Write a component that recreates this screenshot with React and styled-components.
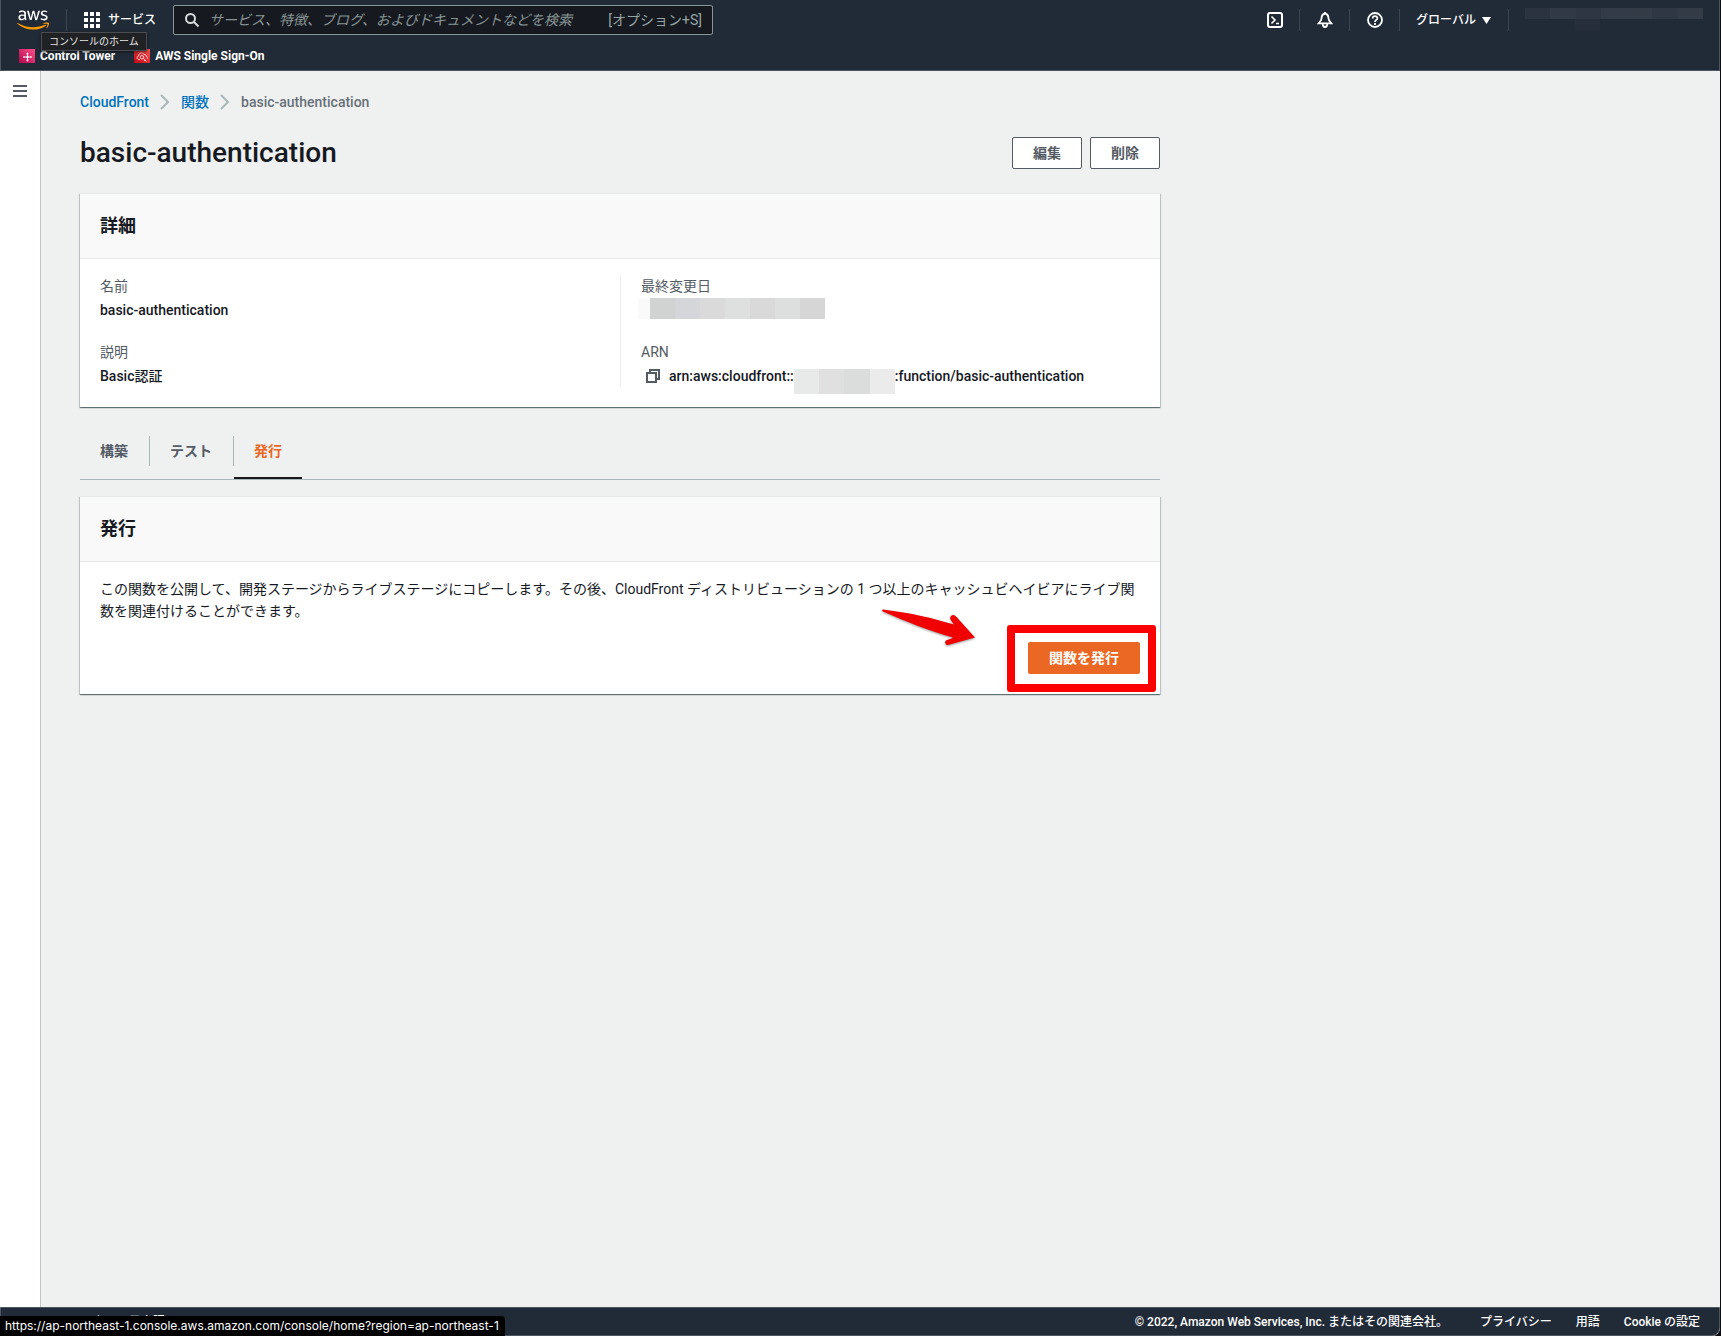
import { styled, createGlobalStyle } from 'styled-components';
import { FaAws } from 'react-icons/fa';

const ACCOUNT_CELLS = ['#2a333f', '#303945', '#2d3642', '#323b47', '#333b47', '#2e3743', '#323b46'];
const DATE_CELLS = ['#d1d3d2', '#d5d6d9', '#dadada', '#dee0df', '#d9d9d9', '#dddfde', '#d6d6d6'];
const ARN_CELLS = ['#e8eaea', '#e0e0e0', '#dbdcdc', '#ebebeb'];

export default function App() {
  return (
    <Page>
      <GlobalStyle />
      <Header />
      <Body>
        <SideBar>
          <MenuButton aria-label="メニュー">
            <svg width="14" height="12" viewBox="0 0 14 12" fill="#545b64">
              <path d="M0 0h14v2H0zM0 5h14v2H0zM0 10h14v2H0z" />
            </svg>
          </MenuButton>
        </SideBar>
        <Main>
          <Content>
            <Breadcrumbs>
              <a href="#cloudfront">CloudFront</a>
              <Chevron />
              <a href="#functions">関数</a>
              <Chevron />
              <span>basic-authentication</span>
            </Breadcrumbs>
            <TitleRow>
              <h1>basic-authentication</h1>
              <Actions>
                <Button>編集</Button>
                <Button>削除</Button>
              </Actions>
            </TitleRow>
            <Details />
            <Tabs />
            <Publish />
          </Content>
        </Main>
      </Body>
      <Footer />
      <StatusBar>
        https://ap-northeast-1.console.aws.amazon.com/console/home?region=ap-northeast-1
      </StatusBar>
    </Page>
  );
}

function Header() {
  return (
    <HeaderContainer>
      <TopRow>
        <LogoLink href="#home" aria-label="AWS">
          <svg width="0" height="0">
            <linearGradient id="aws-fill" x1="0" y1="0" x2="0" y2="1">
              <stop offset="0.63" stopColor="#fff" />
              <stop offset="0.63" stopColor="#f90" />
            </linearGradient>
          </svg>
          <FaAws />
        </LogoLink>
        <Divider />
        <ServicesButton>
          <svg width="16" height="16" viewBox="0 0 16 16" fill="#fff">
            {[0, 6, 12].map((y) =>
              [0, 6, 12].map((x) => (
                <rect key={`${x}-${y}`} x={x} y={y} width="4" height="4" />
              ))
            )}
          </svg>
          サービス
        </ServicesButton>
        <SearchBox>
          <svg width="14" height="14" viewBox="0 0 14 14" fill="none" stroke="#d5dbdb" strokeWidth="2">
            <circle cx="5.5" cy="5.5" r="4.5" />
            <path d="M9 9l4.5 4.5" />
          </svg>
          <input
            type="text"
            aria-label="検索"
            placeholder="サービス、特徴、ブログ、およびドキュメントなどを検索"
          />
          <Shortcut>[オプション+S]</Shortcut>
        </SearchBox>
        <Tools>
          <ToolButton aria-label="CloudShell">
            <svg width="16" height="16" viewBox="0 0 16 16" fill="none" stroke="#fff" strokeWidth="2">
              <rect x="1" y="1" width="14" height="14" rx="2" />
              <path d="M4.500 4.500L8 8l-3.500 3.500M9 11.500h3" strokeWidth="1.600" />
            </svg>
          </ToolButton>
          <ToolButton aria-label="通知">
            <svg width="16" height="16" viewBox="0 0 16 16" fill="none" stroke="#fff" strokeWidth="1.800">
              <path d="M8 1.500C5.500 2 4.600 4 4.500 6.500 4.400 8.500 3 9.700 1.600 11.400h12.800C13 9.700 11.600 8.500 11.500 6.500 11.400 4 10.500 2 8 1.500z" />
              <path d="M5.800 12c0 4 4.400 4 4.400 0M8 0v2" />
            </svg>
          </ToolButton>
          <ToolButton aria-label="ヘルプ">
            <svg width="16" height="16" viewBox="0 0 16 16" fill="none" stroke="#fff" strokeWidth="1.800">
              <circle cx="8" cy="8" r="7" />
              <path d="M5.700 6.500c0-3.200 4.700-3 4.700-.300C10.400 8 8 7.800 8 10" />
              <path d="M8 11v2" />
            </svg>
          </ToolButton>
          <RegionButton>
            グローバル
            <svg width="9" height="7" viewBox="0 0 9 7" fill="#fff">
              <path d="M0 0h9L4.500 7z" />
            </svg>
          </RegionButton>
          <Account>
            <Mosaic cells={ACCOUNT_CELLS} height={11} />
            <AccountTail />
          </Account>
        </Tools>
      </TopRow>
      <Favorites>
        <Favorite href="#control-tower">
          <svg width="16" height="14" viewBox="0 0 16 14">
            <defs>
              <linearGradient id="tower" x1="0" y1="1" x2="1" y2="0">
                <stop offset="0" stopColor="#b0084d" />
                <stop offset="1" stopColor="#ff4f8b" />
              </linearGradient>
            </defs>
            <rect width="16" height="14" fill="url(#tower)" />
            <path d="M8.500 4v8M4.500 8h8M7.400 5l1.100-1 1.100 1M7.400 11l1.100 1 1.100-1M5.500 7l-1 1 1 1M11.500 7l1 1-1 1" fill="none" stroke="#fff" strokeWidth="0.900" />
            <circle cx="8.500" cy="8" r="1.200" fill="#fff" />
          </svg>
          Control Tower
        </Favorite>
        <Favorite href="#sso">
          <svg width="16" height="14" viewBox="0 0 16 14">
            <defs>
              <linearGradient id="sso" x1="0" y1="1" x2="1" y2="0">
                <stop offset="0" stopColor="#bd0816" />
                <stop offset="1" stopColor="#ff5252" />
              </linearGradient>
            </defs>
            <rect width="16" height="14" fill="url(#sso)" />
            <g fill="none" stroke="#ffd9d9" strokeWidth="0.900">
              <path d="M6 10.500H5C2.500 10.500 2.500 7.200 4.700 7 4.500 3.400 9 2.800 10 5.500c1.500-.500 2 .500 2 1.500 1.500.300 1.800 1.800 1 2.700" />
              <circle cx="8" cy="8.200" r="1.700" />
              <path d="M9.300 9.400l3.200 3M11 11l-.800.900" />
            </g>
          </svg>
          AWS Single Sign-On
        </Favorite>
      </Favorites>
      <Tooltip role="tooltip">コンソールのホーム</Tooltip>
    </HeaderContainer>
  );
}

function Details() {
  return (
    <Card>
      <CardHeader>
        <h2>詳細</h2>
      </CardHeader>
      <DetailGrid>
        <Column>
          <Field label="名前">basic-authentication</Field>
          <Field label="説明">Basic認証</Field>
        </Column>
        <Column $divided>
          <Field label="最終変更日">
            <DateMask>
              <Mosaic cells={DATE_CELLS} height={21} />
            </DateMask>
          </Field>
          <Field label="ARN">
            <CopyButton aria-label="コピー">
              <svg width="14" height="14" viewBox="0 0 14 14" fill="none" stroke="#545b64" strokeWidth="2">
                <path d="M4 3.500V1h9v9h-2.500" />
                <path d="M1 4h9v9H1z" />
              </svg>
            </CopyButton>
            arn:aws:cloudfront::
            <ArnMask>
              <Mosaic cells={ARN_CELLS} height={25} />
            </ArnMask>
            :function/basic-authentication
          </Field>
        </Column>
      </DetailGrid>
    </Card>
  );
}

function Field({ label, children }) {
  return (
    <FieldContainer>
      <dt>{label}</dt>
      <dd>{children}</dd>
    </FieldContainer>
  );
}

function Tabs() {
  return (
    <TabList role="tablist">
      <Tab role="tab">構築</Tab>
      <TabSeparator />
      <Tab role="tab">テスト</Tab>
      <TabSeparator />
      <Tab role="tab" aria-selected="true" $active>
        発行
      </Tab>
    </TabList>
  );
}

function Publish() {
  return (
    <Card>
      <CardHeader>
        <h2>発行</h2>
      </CardHeader>
      <PublishBody>
        <p>
          この関数を公開して、開発ステージからライブステージにコピーします。その後、CloudFront
          ディストリビューションの 1 つ以上のキャッシュビヘイビアにライブ関数を関連付けることができます。
        </p>
        <Highlighted>
          <Arrow width="96" height="36" viewBox="0 0 96 36">
            <path
              d="M1 0.500C30 4 50 9 72 15.500c-3-4-5-6-3-8.500 2-2 4-1 5.500 1L93 28.500 66 36c-3 .500-4-4-1-5 2-1 4-1 6-2.500C45 21 25 13 1 2.500-.200 2 0 .500 1 .500z"
              fill="#f00000"
            />
          </Arrow>
          <Callout />
          <Button $primary>関数を発行</Button>
        </Highlighted>
      </PublishBody>
    </Card>
  );
}

function Footer() {
  return (
    <FooterContainer>
      <FooterGroup>
        <a href="#feedback">フィードバック</a>
        <a href="#language">日本語</a>
      </FooterGroup>
      <FooterGroup>
        <Copyright>© 2022, Amazon Web Services, Inc. またはその関連会社。</Copyright>
        <a href="#privacy">プライバシー</a>
        <a href="#terms">用語</a>
        <a href="#cookie">Cookie の設定</a>
      </FooterGroup>
    </FooterContainer>
  );
}

function Mosaic({ cells, height }) {
  return (
    <MosaicRow $height={height}>
      {cells.map((color, i) => (
        <Cell key={i} $color={color} />
      ))}
    </MosaicRow>
  );
}

function Chevron() {
  return (
    <svg width="10" height="16" viewBox="0 0 10 16" fill="none" stroke="#aab7b8" strokeWidth="2">
      <path d="M1 1l7 7-7 7" />
    </svg>
  );
}

const GlobalStyle = createGlobalStyle`
  * {
    box-sizing: border-box;
  }
  body {
    margin: 0;
    background: #0b0d10;
    color: #16191f;
    font-family: Roboto, 'Noto Sans CJK JP', sans-serif;
    font-size: 14px;
    line-height: 22px;
  }
  h1, h2, p, dl, dt, dd {
    margin: 0;
  }
  a {
    color: #0073bb;
    text-decoration: none;
  }
  button {
    margin: 0;
    padding: 0;
    border: 0;
    background: none;
    color: inherit;
    font: inherit;
    cursor: pointer;
  }
  svg {
    flex: none;
    display: block;
  }
`;

const Page = styled.div`
  position: relative;
  display: flex;
  flex-direction: column;
  min-height: 100vh;
  margin-right: 1px;
  border-bottom-right-radius: 8px;
  overflow: hidden;
  background: #eff1f1;
`;

const HeaderContainer = styled.header`
  position: relative;
  border: solid #4d5560;
  border-width: 0 1px 1px;
  background: #212b37;
  color: #fff;
  font-size: 12px;
  font-weight: 500;
`;
const TopRow = styled.div`
  display: flex;
  align-items: center;
  height: 40px;
  padding: 0 16px;
`;
const LogoLink = styled.a`
  svg {
    width: 32px;
    height: 26px;
  }
  svg:first-child {
    position: absolute;
    width: 0;
    height: 0;
  }
  path {
    fill: url(#aws-fill);
  }
`;
const Divider = styled.span`
  width: 1px;
  height: 22px;
  margin: 0 17px;
  background: #3b444f;
`;
const ServicesButton = styled.button`
  display: flex;
  flex: none;
  align-items: center;
  gap: 8px;
  margin-right: 17px;
`;
const SearchBox = styled.div`
  display: flex;
  flex: 0 1 540px;
  align-items: center;
  height: 30px;
  padding: 0 10px 0 11px;
  border: 1px solid #879596;
  border-radius: 2px;
  background: #16191f;
  font-size: 14px;
  font-weight: 400;

  input {
    flex: 1;
    min-width: 0;
    padding: 0 0 0 10px;
    border: 0;
    outline: 0;
    background: none;
    color: #fff;
    font: inherit;
  }
  input::placeholder {
    color: #879596;
    font-style: italic;
    opacity: 1;
  }
`;
const Shortcut = styled.span`
  flex: none;
  color: #95a5a6;
`;
const Tools = styled.div`
  display: flex;
  align-items: center;
  margin-left: auto;
`;
const ToolButton = styled.button`
  padding: 3px 16px 3px 17px;
  border-right: 1px solid #3b444f;
`;
const RegionButton = styled.button`
  display: flex;
  align-items: center;
  gap: 6px;
  padding: 0 17px 0 16px;
  border-right: 1px solid #3b444f;
`;
const Account = styled.div`
  width: 194px;
  height: 24px;
  padding-left: 16px;
`;
const AccountTail = styled.div`
  width: 25px;
  height: 12px;
  margin-left: 50px;
  background: #252e3a;
`;
const Favorites = styled.nav`
  display: flex;
  align-items: center;
  gap: 19px;
  height: 30px;
  padding: 2px 18px 0;
`;
const Favorite = styled.a`
  display: flex;
  align-items: center;
  gap: 5px;
  color: #fff;
  font-weight: 700;
`;
const Tooltip = styled.div`
  position: absolute;
  top: 32px;
  left: 40px;
  padding: 0 7px;
  border: 1px solid #4a4c50;
  background: #202124;
  box-shadow: 0 1px 3px rgba(0, 0, 0, 0.6);
  color: #e4e4e4;
  font-size: 10px;
  font-weight: 400;
  line-height: 17px;
`;

const Body = styled.div`
  display: flex;
  flex: 1;
`;
const SideBar = styled.aside`
  flex: none;
  width: 41px;
  padding: 14px 13px;
  border-right: 1px solid #bfc5c6;
  background: #fff;
`;
const MenuButton = styled.button`
  display: block;
`;
const Main = styled.main`
  flex: 1;
  min-width: 0;
  padding: 20px 39px;
`;
const Content = styled.div`
  max-width: 1080px;
`;
const Breadcrumbs = styled.nav`
  display: flex;
  align-items: center;
  gap: 11px;
  color: #687078;
  font-weight: 500;
`;
const TitleRow = styled.div`
  display: flex;
  align-items: center;
  justify-content: space-between;
  margin: 22px 0;

  h1 {
    font-size: 28px;
    font-weight: 500;
    line-height: 36px;
  }
`;
const Actions = styled.div`
  display: flex;
  gap: 8px;
`;
const Button = styled.button`
  height: 32px;
  padding: 0 20px;
  border: 1px solid ${({ $primary }) => ($primary ? '#ea6823' : '#545b64')};
  border-radius: 2px;
  background: ${({ $primary }) => ($primary ? '#ea6823' : '#fff')};
  color: ${({ $primary }) => ($primary ? '#fff' : '#545b64')};
  font-weight: 700;
  line-height: 20px;
`;

const Card = styled.section`
  border-top: 1px solid #e4e8e8;
  background: #fff;
  box-shadow: 0 1px 1px 0 rgba(0, 28, 36, 0.45), 1px 1px 1px 0 rgba(0, 28, 36, 0.15),
    -1px 1px 1px 0 rgba(0, 28, 36, 0.15);
`;
const CardHeader = styled.div`
  padding: 20px;
  border-bottom: 1px solid #e6e8e8;
  background: #f9f9f9;

  h2 {
    font-size: 18px;
    font-weight: 700;
    line-height: 24px;
  }
`;
const DetailGrid = styled.div`
  display: grid;
  grid-template-columns: 1fr 1fr;
  padding: 16px 20px 20px;
`;
const Column = styled.dl`
  display: flex;
  flex-direction: column;
  gap: 20px;
  padding-left: ${({ $divided }) => ($divided ? '20px' : '0')};
  border-left: ${({ $divided }) => ($divided ? '1px solid #eaeded' : '0')};
`;
const FieldContainer = styled.div`
  dt {
    color: #545b64;
  }
  dd {
    display: flex;
    align-items: center;
    height: 22px;
    margin-top: 2px;
    font-weight: 500;
  }
`;
const CopyButton = styled.button`
  padding: 0 9px 0 5px;
`;
const DateMask = styled.div`
  align-self: flex-start;
  width: 187px;
  margin: -1px 0 0 -3px;
  padding-left: 12px;
  background: #fafafa;
`;
const ArnMask = styled.div`
  width: 101px;
  margin-top: 10px;
`;
const MosaicRow = styled.div`
  display: flex;
  height: ${({ $height }) => $height}px;
`;
const Cell = styled.span`
  flex: 1;
  background: ${({ $color }) => $color};
`;

const TabList = styled.div`
  display: flex;
  align-items: center;
  height: 57px;
  margin: 16px 0;
  border-bottom: 1px solid #aab7b8;
`;
const Tab = styled.button`
  height: 56px;
  padding: 2px 20px 0;
  border-bottom: 2px solid ${({ $active }) => ($active ? '#16191f' : 'transparent')};
  color: ${({ $active }) => ($active ? '#ea6823' : '#545b64')};
  font-weight: 700;
`;
const TabSeparator = styled.span`
  width: 1px;
  height: 30px;
  margin-left: 1px;
  background: #aab7b8;
`;

const PublishBody = styled.div`
  display: flex;
  flex-direction: column;
  align-items: flex-end;
  gap: 20px;
  padding: 16px 20px 20px;

  p {
    width: 100%;
  }
`;
const Highlighted = styled.div`
  position: relative;
`;
const Callout = styled.div`
  position: absolute;
  inset: -17px -16px -18px -21px;
  border: 8px solid #f00;
  border-radius: 3px;
  pointer-events: none;
`;
const Arrow = styled.svg`
  position: absolute;
  top: -33px;
  left: -146px;
  filter: drop-shadow(0 1px 1px rgba(0, 0, 0, 0.4));
`;

const FooterContainer = styled.footer`
  display: flex;
  align-items: center;
  justify-content: space-between;
  height: 29px;
  padding: 0 19px 0 20px;
  border: 1px solid #4d5560;
  border-bottom-right-radius: 8px;
  background: #212b37;
  color: #fff;
  font-size: 12px;
  font-weight: 500;
`;
const FooterGroup = styled.div`
  display: flex;
  gap: 24px;

  a {
    color: #fff;
  }
`;
const Copyright = styled.span`
  margin-right: 8px;
`;
const StatusBar = styled.div`
  position: absolute;
  bottom: 0;
  left: 0;
  padding: 0 6px 0 5px;
  border-top-right-radius: 4px;
  background: #000;
  color: #fff;
  font-family: Inter, Roboto, sans-serif;
  font-size: 12px;
  line-height: 20px;
`;
